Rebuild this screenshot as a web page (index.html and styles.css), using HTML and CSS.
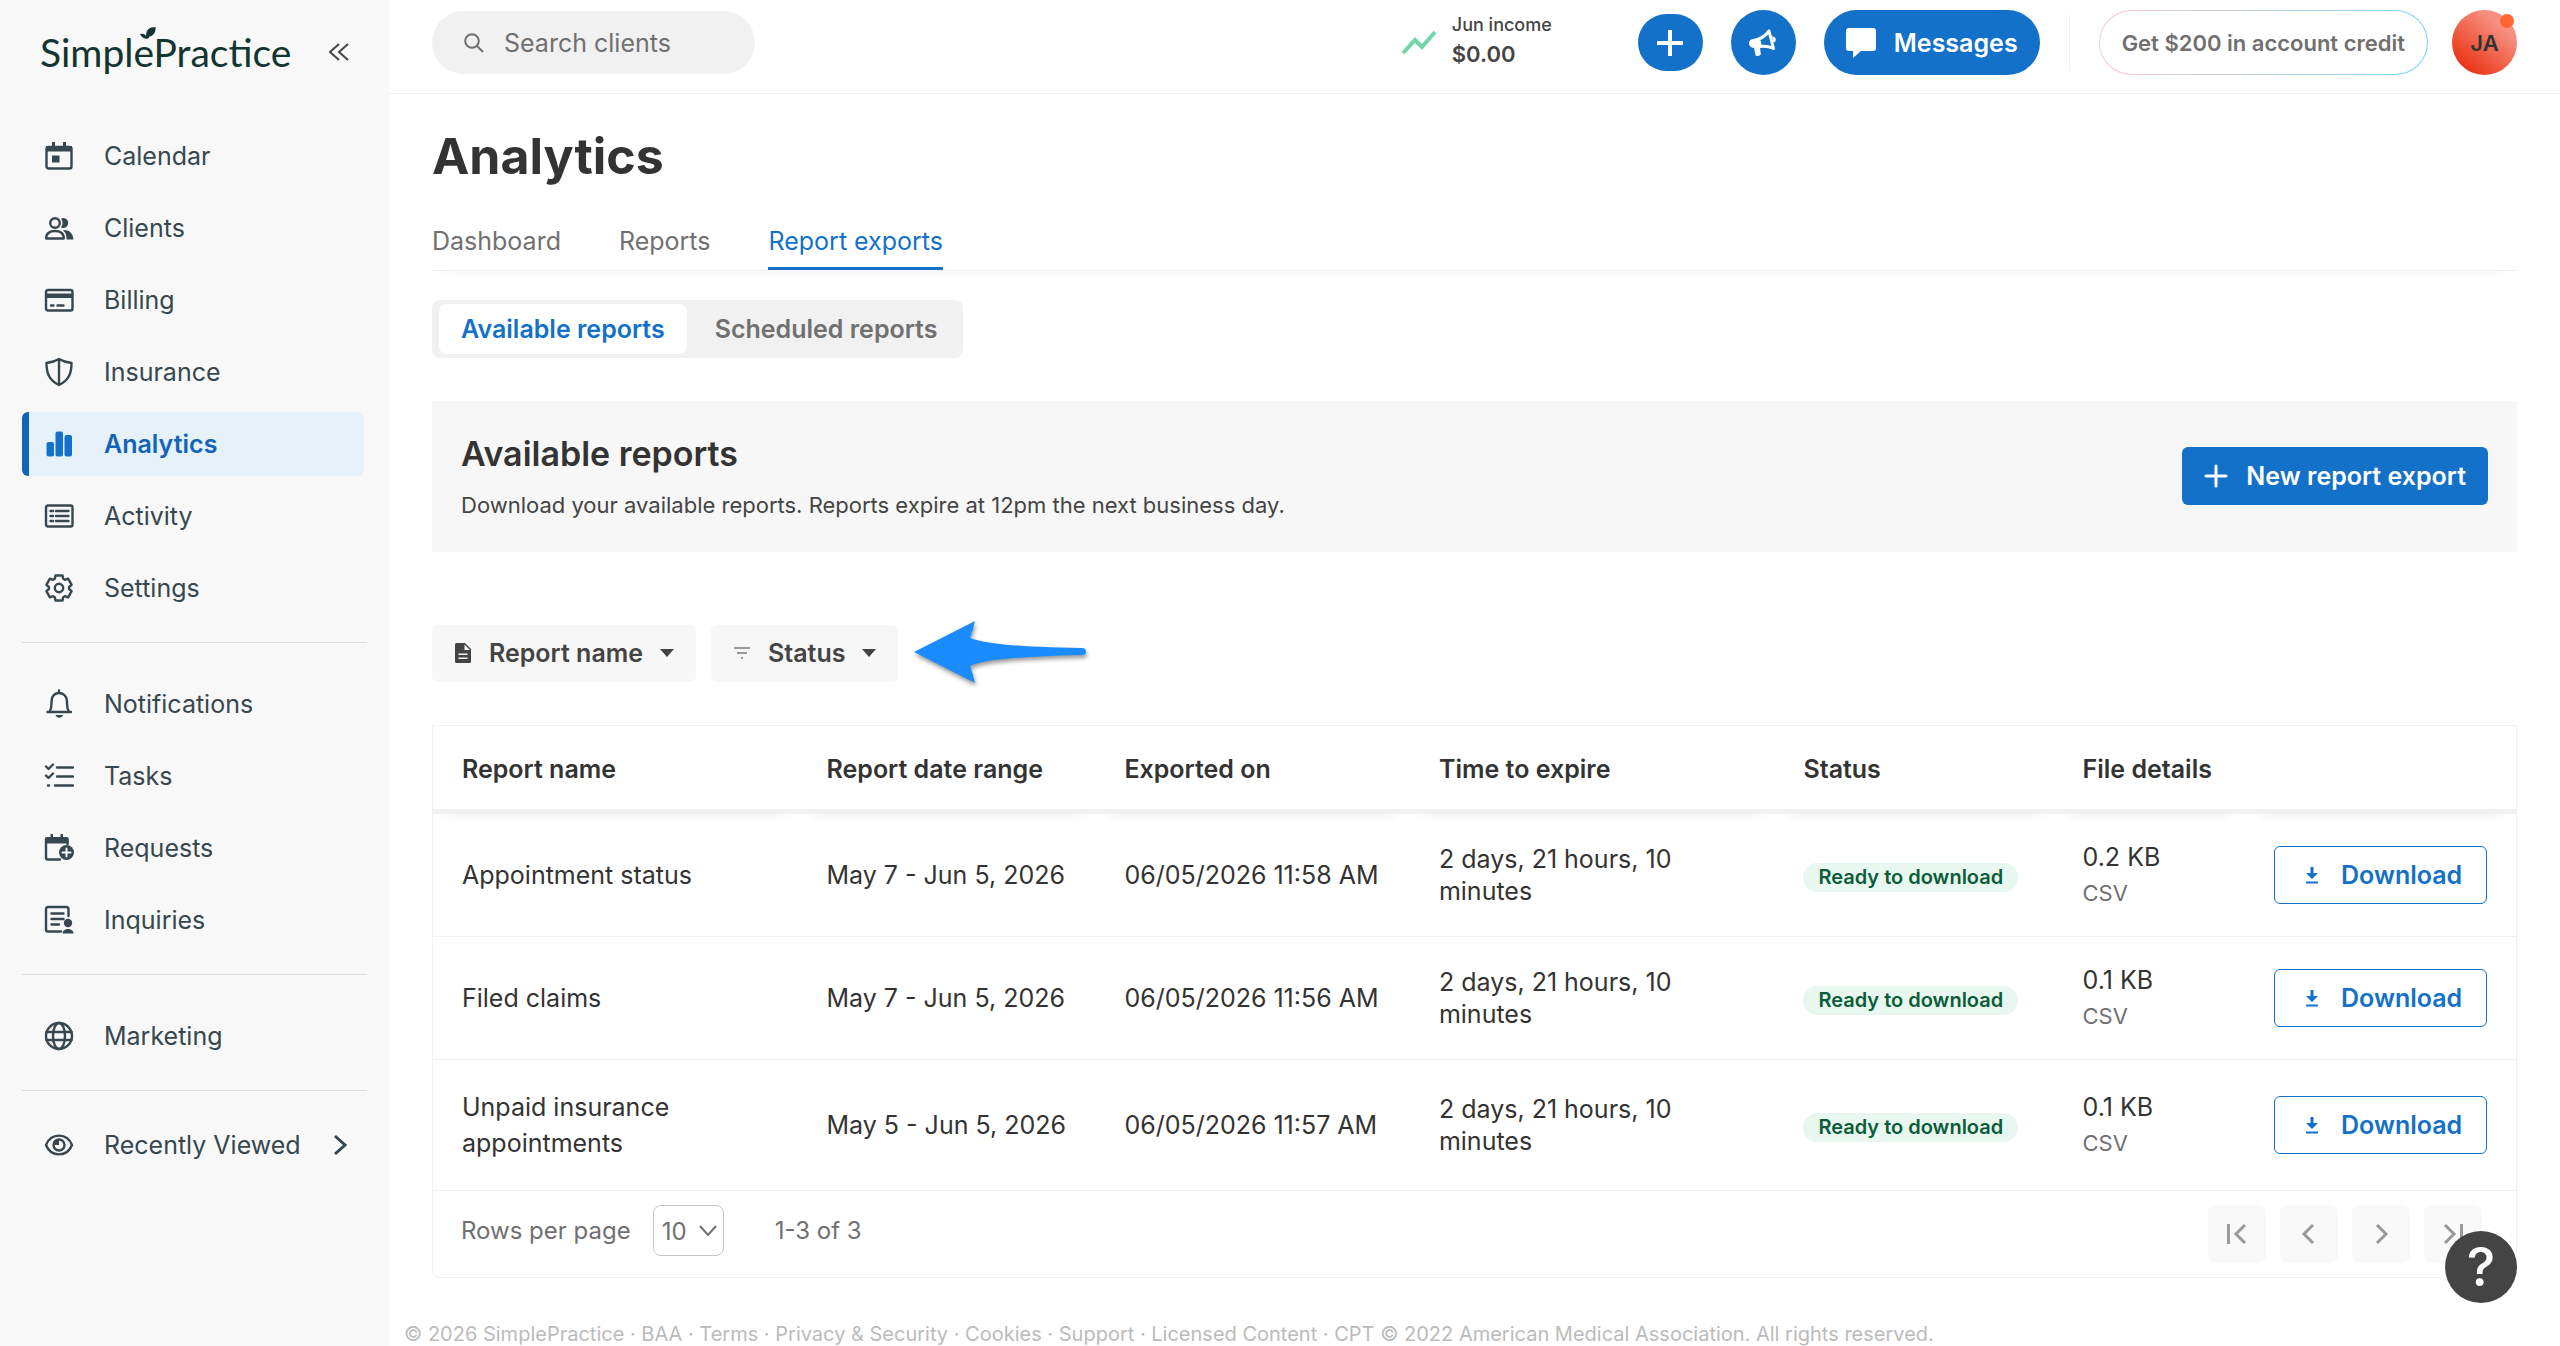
FILE: index.html
```html
<!DOCTYPE html>
<html lang="en">
<head>
  <meta charset="UTF-8">
  <title>Analytics - Report exports</title>
  <meta name="viewport" content="width=device-width, initial-scale=1.0">
  <link rel="stylesheet" href="styles.css">
</head>
<body>
  <div class="app">

    <!-- Sidebar -->
    <aside class="sidebar">
      <div class="brand">
        <a class="logo" href="#">SimplePractice<svg class="leaf" viewBox="0 0 16 14" width="16" height="14"><path d="M6 9C6 3 9 0 15.500 0C16 6 13 9 9.500 9.500C9 13 3 13 0 7C3 6.500 5 7 6 9Z"/></svg></a>
        <button class="collapse" aria-label="Collapse menu">
          <svg viewBox="0 0 20 20" width="20" height="20"><path d="M10 2L1 10L10 18M19 2L10 10L19 18"/></svg>
        </button>
      </div>

      <nav class="menu">
        <a class="item" href="#">
          <svg class="icon" viewBox="0 0 30 30"><rect x="2.500" y="6" width="25" height="21.500" rx="2"/><path class="fill" d="M2 5h26v5.500H2zM8 1h3v5H8zM19 1h3v5h-3zM8 14.500h7.500v7H8z"/></svg>
          Calendar
        </a>
        <a class="item" href="#">
          <svg class="icon" viewBox="0 0 30 30"><circle cx="11" cy="10" r="4.800"/><path d="M2.200 25.500C2 20 6 18 11 18S20 20 19.800 25.500Z"/><path class="fill" d="M17 5.500a5 5 0 1 1 0 9c2-3 2-6 0-9zM20 17c5 0 9 3 9.500 9.500H22.500c0-4-.5-7-3.500-9z"/></svg>
          Clients
        </a>
        <a class="item" href="#">
          <svg class="icon" viewBox="0 0 30 30"><rect x="2" y="5" width="26.500" height="20.500" rx="2"/><path class="fill" d="M2 8.500h26v4.500H2z"/><path d="M7 20.500h2.500M13.500 20.500h6"/></svg>
          Billing
        </a>
        <a class="item" href="#">
          <svg class="icon" viewBox="0 0 30 30"><path d="M15 2C11 4.500 7 5.500 2.500 6C2.500 16 5 23.500 15 28C25 23.500 27.500 16 27.500 6C23 5.500 19 4.500 15 2ZM15 2V28"/></svg>
          Insurance
        </a>
        <a class="item active" href="#">
          <svg class="icon" viewBox="0 0 30 30"><rect class="fill" x="2.500" y="13" width="7.500" height="14.500" rx="2"/><rect class="fill" x="11.500" y="2.500" width="7.500" height="25" rx="2"/><rect class="fill" x="20.500" y="6" width="7.500" height="21.500" rx="2"/></svg>
          Analytics
        </a>
        <a class="item" href="#">
          <svg class="icon" viewBox="0 0 30 30"><rect x="2" y="4.500" width="26.500" height="21" rx="2"/><path d="M6.500 10h2.500M6.500 15h2.500M6.500 20h2.500M12 10h12.500M12 15h12.500M12 20h12.500"/></svg>
          Activity
        </a>
        <a class="item" href="#">
          <svg class="icon" viewBox="-15 -15 30 30"><path d="M-3.500-12.500H3.500L4.200-9.200 5.900-8.200 9.100-9.300 12.600-3.200 10.100-1V1L12.600 3.200 9.100 9.300 5.900 8.200 4.200 9.200 3.500 12.500H-3.500L-4.200 9.200-5.900 8.200-9.100 9.300-12.600 3.200-10.100 1V-1L-12.600-3.200-9.100-9.300-5.900-8.200-4.200-9.200Z"/><circle r="4.200"/></svg>
          Settings
        </a>
      </nav>

      <nav class="menu">
        <a class="item" href="#">
          <svg class="icon" viewBox="0 0 30 30"><path d="M3.500 23h23.500M5.500 23C8 19 7.500 17 7.500 12C7.500 7 11 4 15 4S23 7 23 12C23 17 22.500 19 25 23M15 1.500V4"/><path class="fill" d="M11.500 26h7.500c-1 3.500-6.500 3.500-7.500 0z"/></svg>
          Notifications
        </a>
        <a class="item" href="#">
          <svg class="icon" viewBox="0 0 30 30"><path d="M2 5.500l2.500 2.500 4.500-4.500M2 14.500L4.500 17l4.500-4.500M13 6.500h16M13 15.500h16M11 24.500h18M4 24.500h1"/></svg>
          Tasks
        </a>
        <a class="item" href="#">
          <svg class="icon" viewBox="0 0 30 30"><path d="M23.500 11V6H2v18.500a2 2 0 0 0 2 2h12"/><path class="fill" d="M1 6a2 2 0 0 1 2-2h19.500a2 2 0 0 1 2 2v4.500H1zM6.500 1h2.500v4H6.500zM16.500 1h2.500v4h-2.500z"/><circle class="fill" cx="22.500" cy="19.500" r="7.500"/><path class="cut" d="M18.500 19.500h8M22.500 15.500v8"/></svg>
          Requests
        </a>
        <a class="item" href="#">
          <svg class="icon" viewBox="0 0 30 30"><path d="M24.500 11V4a2 2 0 0 0-2-2H4a2 2 0 0 0-2 2v20.500a2 2 0 0 0 2 2h13M7.500 8.500h12M7.500 14h12M7.500 19.500h7.500"/><circle class="fill" cx="24" cy="18" r="4.200"/><path class="fill" d="M18.500 28.500c0-6 11-6 11 0z"/></svg>
          Inquiries
        </a>
      </nav>

      <nav class="menu">
        <a class="item" href="#">
          <svg class="icon" viewBox="0 0 30 30"><circle cx="15" cy="15" r="13"/><ellipse cx="15" cy="15" rx="6" ry="13"/><path d="M2.500 11h25M2.500 19h25"/></svg>
          Marketing
        </a>
      </nav>

      <nav class="menu recent">
        <a class="item" href="#">
          <svg class="icon" viewBox="0 0 30 30"><path d="M2 15C7 2.500 23 2.500 28 15C23 27.500 7 27.500 2 15Z"/><circle cx="15" cy="15" r="5.500"/><path class="fill" d="M15 9v6H9c0-4 2.500-6 6-6z"/></svg>
          Recently Viewed
          <svg class="more" viewBox="0 0 14 22" width="14" height="22"><path d="M2 2L12 11L2 20"/></svg>
        </a>
      </nav>
    </aside>

    <div class="main">
      <!-- Top bar -->
      <header class="topbar">
        <label class="search">
          <svg viewBox="0 0 20 20" width="20" height="20"><circle cx="8" cy="8" r="6.800"/><path d="M13 13l6 6"/></svg>
          <input type="text" placeholder="Search clients" aria-label="Search clients">
        </label>
        <div class="income">
          <svg viewBox="0 0 36 26" width="36" height="26"><path d="M2 23L14 10L21 17L34 2"/></svg>
          <div class="income-text">
            <div class="income-label">Jun income</div>
            <div class="income-value">$0.00</div>
          </div>
        </div>
        <button class="round add" aria-label="Create">
          <svg viewBox="0 0 26 26" width="26" height="26"><path d="M13 0V26M0 13H26"/></svg>
        </button>
        <button class="round" aria-label="Announcements">
          <svg class="horn" viewBox="0 0 30 30" width="30" height="30"><path d="M21 3C18 7 15 9.500 10.500 11L12.500 18.500C17 18 21 18.500 25.500 20.500Z"/><path class="fill" d="M11 9.500L3.500 11.500C-1 13 1 20.500 6 19.800L7.500 27C8 28.800 13 28 12.800 26L12 19.500ZM24 8.500C28.500 8 29 14 25.500 14.500Z"/></svg>
        </button>
        <button class="messages">
          <svg viewBox="0 0 30 30" width="30" height="30"><path d="M3 0h24a3 3 0 0 1 3 3v17a3 3 0 0 1-3 3H15l-8 7v-7H3a3 3 0 0 1-3-3V3a3 3 0 0 1 3-3z"/></svg>
          Messages
        </button>
        <span class="rule"></span>
        <button class="credit">Get $200 in account credit</button>
        <button class="avatar">JA<span class="dot"></span></button>
      </header>

      <main class="content">
        <h1>Analytics</h1>
        <nav class="tabs">
          <a href="#">Dashboard</a>
          <a href="#">Reports</a>
          <a class="current" href="#">Report exports</a>
        </nav>

        <div class="segment">
          <button class="selected">Available reports</button>
          <button>Scheduled reports</button>
        </div>

        <section class="banner">
          <div>
            <h2>Available reports</h2>
            <p>Download your available reports. Reports expire at 12pm the next business day.</p>
          </div>
          <button class="primary">
            <svg viewBox="0 0 24 24" width="24" height="24"><path d="M12 2V22M2 12H22"/></svg>
            New report export
          </button>
        </section>

        <div class="filters">
          <button class="filter">
            <svg viewBox="0 0 18 22" width="18" height="22"><path fill-rule="evenodd" d="M2.500 1H11l6 6v12.500a1.500 1.500 0 0 1-1.500 1.500h-13A1.500 1.500 0 0 1 1 19.500v-17A1.500 1.500 0 0 1 2.500 1zM10.500 2.500V8H16zM4.500 11.500v1.500h9v-1.500zM4.500 15.500V17h9v-1.500z"/></svg>
            Report name
            <svg class="caret" viewBox="0 0 14 8" width="14" height="8"><path d="M0 0H14L7 8Z"/></svg>
          </button>
          <button class="filter">
            <svg class="lines" viewBox="0 0 18 14" width="18" height="14"><path d="M1 2H17M4 7H14M8 12H10"/></svg>
            Status
            <svg class="caret" viewBox="0 0 14 8" width="14" height="8"><path d="M0 0H14L7 8Z"/></svg>
          </button>
          <svg class="pointer" viewBox="0 0 174 66" width="174" height="66"><path d="M1 32L62 1Q60 10 57 18Q80 27 169 28Q173 28 173 32Q173 35 169 35Q75 37 57 46Q60 54 62 63Z"/></svg>
        </div>

        <div class="card">
          <table>
            <colgroup>
              <col class="c-name"><col class="c-range"><col class="c-date"><col class="c-expire"><col class="c-status"><col class="c-file"><col>
            </colgroup>
            <thead>
              <tr>
                <th>Report name</th>
                <th>Report date range</th>
                <th>Exported on</th>
                <th>Time to expire</th>
                <th>Status</th>
                <th>File details</th>
                <th></th>
              </tr>
            </thead>
            <tbody>
              <tr>
                <td class="name">Appointment status</td>
                <td>May 7 - Jun 5, 2026</td>
                <td>06/05/2026 11:58 AM</td>
                <td class="expire">2 days, 21 hours, 10 minutes</td>
                <td><span class="badge">Ready to download</span></td>
                <td>0.2 KB<small>CSV</small></td>
                <td class="action"><button class="download"><svg viewBox="0 0 14 18" width="14" height="18"><path class="fill" d="M5.500 1h3v6H13L7 13 1 7h4.500z"/><path class="fill" d="M1 15.500h12v2H1z"/></svg>Download</button></td>
              </tr>
              <tr>
                <td class="name">Filed claims</td>
                <td>May 7 - Jun 5, 2026</td>
                <td>06/05/2026 11:56 AM</td>
                <td class="expire">2 days, 21 hours, 10 minutes</td>
                <td><span class="badge">Ready to download</span></td>
                <td>0.1 KB<small>CSV</small></td>
                <td class="action"><button class="download"><svg viewBox="0 0 14 18" width="14" height="18"><path class="fill" d="M5.500 1h3v6H13L7 13 1 7h4.500z"/><path class="fill" d="M1 15.500h12v2H1z"/></svg>Download</button></td>
              </tr>
              <tr>
                <td class="name">Unpaid insurance appointments</td>
                <td>May 5 - Jun 5, 2026</td>
                <td>06/05/2026 11:57 AM</td>
                <td class="expire">2 days, 21 hours, 10 minutes</td>
                <td><span class="badge">Ready to download</span></td>
                <td>0.1 KB<small>CSV</small></td>
                <td class="action"><button class="download"><svg viewBox="0 0 14 18" width="14" height="18"><path class="fill" d="M5.500 1h3v6H13L7 13 1 7h4.500z"/><path class="fill" d="M1 15.500h12v2H1z"/></svg>Download</button></td>
              </tr>
            </tbody>
          </table>

          <div class="pagination">
            <label for="rows">Rows per page</label>
            <span class="select">
              <select id="rows"><option>10</option><option>25</option><option>50</option></select>
              <svg viewBox="0 0 18 12" width="18" height="12"><path d="M1 1L9 10L17 1"/></svg>
            </span>
            <span class="range">1-3 of 3</span>
            <div class="pager">
              <button aria-label="First page"><svg viewBox="0 0 24 24" width="24" height="24"><path d="M3.500 2V22M20 3L11 12L20 21"/></svg></button>
              <button aria-label="Previous page"><svg viewBox="0 0 24 24" width="24" height="24"><path d="M16 3L7 12L16 21"/></svg></button>
              <button aria-label="Next page"><svg viewBox="0 0 24 24" width="24" height="24"><path d="M8 3L17 12L8 21"/></svg></button>
              <button aria-label="Last page"><svg viewBox="0 0 24 24" width="24" height="24"><path d="M4 3L13 12L4 21M20.500 2V22"/></svg></button>
            </div>
          </div>
        </div>
      </main>

      <footer>© 2026 SimplePractice · BAA · Terms · Privacy &amp; Security · Cookies · Support · Licensed Content · CPT © 2022 American Medical Association. All rights reserved.</footer>
    </div>
  </div>

  <button class="help" aria-label="Help">?</button>
</body>
</html>
```
FILE: styles.css
```css
* {
  box-sizing: border-box;
}

body {
  margin: 0;
  font-family: Inter, "Liberation Sans", sans-serif;
  font-size: 25px;
  line-height: 36px;
  color: #333;
  background: #fff;
}

a {
  color: inherit;
  text-decoration: none;
}

button {
  font: inherit;
  color: inherit;
  border: none;
  padding: 0;
  cursor: pointer;
  display: flex;
  align-items: center;
  justify-content: center;
}

svg {
  flex: none;
  fill: none;
  stroke: currentColor;
}

.fill {
  fill: currentColor;
  stroke: none;
}

.app {
  display: flex;
  min-height: 100vh;
}

/* Sidebar */
.sidebar {
  flex: none;
  width: 389px;
  padding: 0 22px;
  background: #f8f8f8;
  color: #37474f;
}

.brand {
  display: flex;
  align-items: center;
  justify-content: space-between;
  height: 94px;
  padding: 10px 18px 0 18px;
  margin-bottom: 30px;
}

.logo {
  position: relative;
  font-family: Lato, sans-serif;
  font-size: 39px;
  color: #133532;
}

.leaf {
  position: absolute;
  left: 100px;
  top: -7px;
  fill: #133532;
  stroke: none;
}

.collapse {
  background: none;
  color: #444;
}

.collapse svg {
  stroke-width: 2;
}

.menu {
  display: flex;
  flex-direction: column;
  gap: 8px;
}

.menu + .menu {
  margin-top: 22px;
  padding-top: 29px;
  border-top: 1px solid #ddd;
}

.menu + .recent {
  padding-top: 22px;
}

.item {
  display: flex;
  align-items: center;
  height: 64px;
  margin-right: 3px;
  padding-left: 22px;
  border-radius: 6px;
}

.icon {
  width: 30px;
  height: 30px;
  margin-right: 30px;
  stroke-width: 2.4;
  stroke-linecap: round;
  stroke-linejoin: round;
}

.icon .cut {
  stroke: #f8f8f8;
  stroke-width: 2;
}

.active {
  background: #e6f1fa;
  color: #1264b5;
  font-weight: 600;
  border-left: 7px solid #1264b5;
  padding-left: 15px;
}

.active .icon {
  color: #1371c9;
}

.more {
  margin-left: auto;
  margin-right: 17px;
  stroke-width: 3;
}

/* Top bar */
.main {
  flex: 1;
  min-width: 0;
}

.topbar {
  display: flex;
  align-items: center;
  height: 94px;
  padding: 0 43px 8px;
  border-bottom: 1px solid #f0f0f0;
}

.search {
  display: flex;
  align-items: center;
  gap: 20px;
  width: 323px;
  height: 63px;
  padding: 0 32px;
  border-radius: 32px;
  background: #f1f1f1;
  color: #707070;
}

.search svg {
  stroke-width: 2;
}

.search input {
  width: 100%;
  min-width: 0;
  padding: 0;
  border: none;
  outline: none;
  background: none;
  font: inherit;
}

.search input::placeholder {
  color: #707070;
}

.income {
  display: flex;
  align-items: center;
  gap: 15px;
  margin-left: auto;
  margin-right: 86px;
  color: #444;
  font-weight: 500;
}

.income svg {
  stroke: #6fd8a8;
  stroke-width: 4;
}

.income-text {
  padding-bottom: 6px;
}

.income-label {
  font-size: 18px;
  line-height: 28px;
}

.income-value {
  font-size: 22px;
  font-weight: 600;
  line-height: 30px;
}

.round {
  width: 65px;
  height: 65px;
  margin-right: 28px;
  border-radius: 50%;
  background: #1371c9;
  color: #fff;
}

.add {
  height: 57px;
  border-radius: 29px;
}

.round svg {
  stroke-width: 4;
}

.round .horn {
  stroke-width: 3;
  stroke-linejoin: round;
}

.messages {
  height: 65px;
  gap: 18px;
  padding: 0 22px;
  border-radius: 33px;
  background: #1371c9;
  color: #fff;
  font-weight: 600;
}

.messages svg {
  fill: #fff;
  stroke: none;
}

.rule {
  width: 1px;
  height: 57px;
  margin: 0 29px;
  background: #f0f0f0;
}

.credit {
  height: 65px;
  padding: 0 22px;
  margin-right: 24px;
  border: 1px solid transparent;
  border-radius: 33px;
  background: linear-gradient(#fff, #fff) padding-box, linear-gradient(90deg, #ffc8c8, #76d5ea) border-box;
  color: #707070;
  font-size: 22px;
  font-weight: 600;
}

.avatar {
  position: relative;
  width: 65px;
  height: 65px;
  border-radius: 50%;
  background: linear-gradient(40deg, #ea3516 15%, #f68f80 75%);
  font-size: 22px;
  font-weight: 600;
}

.dot {
  position: absolute;
  top: 4px;
  right: 3px;
  width: 14px;
  height: 14px;
  border-radius: 50%;
  background: #ff6631;
}

/* Page content */
.content {
  padding: 30px 43px 0;
}

h1 {
  margin: 0 0 35px;
  font-size: 50px;
  line-height: 64px;
  font-weight: 700;
}

.tabs {
  display: flex;
  gap: 58px;
  border-bottom: 1px solid #f0f0f0;
  box-shadow: 0 14px 12px -14px rgba(0, 0, 0, 0.06);
  color: #707070;
}

.tabs a {
  padding-bottom: 8px;
  border-bottom: 3px solid transparent;
}

.tabs .current {
  color: #1371c9;
  border-color: #1371c9;
}

.segment {
  display: inline-flex;
  margin-top: 29px;
  padding: 4px 4px 4px 7px;
  border-radius: 8px;
  background: #f1f1f1;
}

.segment button {
  height: 50px;
  padding: 0 22px;
  border-radius: 8px;
  background: none;
  color: #707070;
  font-weight: 600;
}

.segment button + button {
  margin-left: 6px;
}

.segment .selected {
  background: #fff;
  color: #1371c9;
}

.banner {
  display: flex;
  align-items: center;
  justify-content: space-between;
  margin-top: 43px;
  padding: 31px 29px 32px;
  background: #f7f7f7;
}

.banner h2 {
  margin: 0 0 14px;
  font-size: 34px;
  line-height: 44px;
  font-weight: 600;
}

.banner p {
  margin: 0;
  font-size: 22px;
  line-height: 30px;
  color: #444;
}

.primary {
  height: 58px;
  gap: 18px;
  padding: 0 22px;
  border-radius: 6px;
  background: #1371c9;
  color: #fff;
  font-weight: 600;
}

.primary svg {
  stroke-width: 3;
  stroke-linecap: round;
}

.filters {
  display: flex;
  align-items: center;
  gap: 15px;
  height: 58px;
  margin-top: 72px;
}

.filter {
  height: 57px;
  gap: 17px;
  padding: 0 22px;
  border-radius: 6px;
  background: #f7f7f7;
  color: #444;
  font-weight: 600;
}

.filter svg {
  fill: currentColor;
  stroke: none;
}

.filter .lines {
  stroke: #999;
  stroke-width: 2;
}

.pointer {
  fill: #1a8cff;
  stroke: none;
  filter: drop-shadow(1px 3px 2px rgba(0, 0, 0, 0.4));
}

/* Table */
.card {
  margin-top: 43px;
  border: 1px solid #f1f1f1;
  border-radius: 0 0 8px 8px;
}

table {
  width: 100%;
  table-layout: fixed;
  border-spacing: 0;
}

.c-name { width: 17.5%; }
.c-range { width: 14.3%; }
.c-date { width: 15.1%; }
.c-expire { width: 17.5%; }
.c-status { width: 13.4%; }
.c-file { width: 9.2%; }

th {
  padding: 25px 29px 22px;
  border-bottom: 5px solid #f1f1f1;
  box-shadow: 0 14px 12px -14px rgba(0, 0, 0, 0.08);
  text-align: left;
  font-weight: 600;
  white-space: nowrap;
}

td {
  padding: 25px 0 25px 29px;
  border-bottom: 1px solid #f1f1f1;
}

.name {
  padding: 29px;
}

.expire {
  padding-right: 29px;
  line-height: 32px;
}

td small {
  display: block;
  font-size: 22px;
  color: #707070;
}

.badge {
  display: inline-block;
  padding: 0 15px;
  border-radius: 15px;
  background: #e8f8f1;
  color: #0b5c38;
  font-size: 20px;
  line-height: 29px;
  font-weight: 600;
  white-space: nowrap;
}

.action {
  padding-right: 29px;
}

.download {
  gap: 22px;
  width: 100%;
  height: 58px;
  padding-left: 6px;
  border: 1px solid #1371c9;
  border-radius: 6px;
  background: #fff;
  color: #1371c9;
  font-weight: 600;
}

/* Pagination */
.pagination {
  display: flex;
  align-items: flex-start;
  height: 86px;
  padding: 14px 34px 14px 28px;
  color: #707070;
  font-size: 24px;
  line-height: 51px;
}

.select {
  position: relative;
  margin-left: 22px;
}

.select select {
  appearance: none;
  display: block;
  width: 71px;
  height: 51px;
  padding: 0 0 0 8px;
  border: 1px solid #c4c4c4;
  border-radius: 8px;
  background: #fff;
  color: #707070;
  font: inherit;
}

.select svg {
  position: absolute;
  right: 7px;
  top: 20px;
  stroke-width: 2;
  pointer-events: none;
}

.range {
  margin-left: 51px;
}

.pager {
  display: flex;
  gap: 14px;
  margin-left: auto;
}

.pager button {
  width: 58px;
  height: 58px;
  border-radius: 8px;
  background: #f9f9f9;
  color: #999;
}

.pager svg {
  stroke-width: 3;
}

footer {
  padding: 45px 15px 0;
  font-size: 20px;
  line-height: 22px;
  color: #bbb;
}

.help {
  position: fixed;
  right: 43px;
  bottom: 43px;
  width: 72px;
  height: 72px;
  border-radius: 50%;
  background: #444;
  color: #fff;
  font-size: 54px;
  font-weight: 500;
}
```
